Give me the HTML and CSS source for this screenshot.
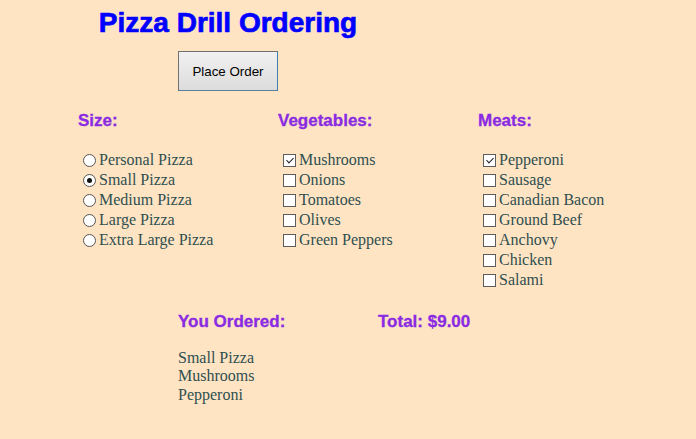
FILE: index.html
```html
<!DOCTYPE html>
<html>
<head>
<meta charset="utf-8">
<title>Pizza Drill Ordering</title>
<link rel="stylesheet" href="styles.css">
</head>
<body>
<div class="page">
  <div class="top">
    <h1 class="title">Pizza Drill Ordering</h1>
    <button class="order-btn" type="button">Place Order</button>
  </div>
  <div class="options">
    <div class="col">
      <h2 class="heading">Size:</h2>
      <div class="list">
        <label class="row"><input type="radio" name="size">Personal Pizza</label>
        <label class="row"><input type="radio" name="size" checked>Small Pizza</label>
        <label class="row"><input type="radio" name="size">Medium Pizza</label>
        <label class="row"><input type="radio" name="size">Large Pizza</label>
        <label class="row"><input type="radio" name="size">Extra Large Pizza</label>
      </div>
    </div>
    <div class="col">
      <h2 class="heading">Vegetables:</h2>
      <div class="list">
        <label class="row"><input type="checkbox" checked>Mushrooms</label>
        <label class="row"><input type="checkbox">Onions</label>
        <label class="row"><input type="checkbox">Tomatoes</label>
        <label class="row"><input type="checkbox">Olives</label>
        <label class="row"><input type="checkbox">Green Peppers</label>
      </div>
    </div>
    <div class="col">
      <h2 class="heading">Meats:</h2>
      <div class="list">
        <label class="row"><input type="checkbox" checked>Pepperoni</label>
        <label class="row"><input type="checkbox">Sausage</label>
        <label class="row"><input type="checkbox">Canadian Bacon</label>
        <label class="row"><input type="checkbox">Ground Beef</label>
        <label class="row"><input type="checkbox">Anchovy</label>
        <label class="row"><input type="checkbox">Chicken</label>
        <label class="row"><input type="checkbox">Salami</label>
      </div>
    </div>
  </div>
  <div class="summary">
    <div class="col">
      <h2 class="heading">You Ordered:</h2>
      <div class="ordered">
        <div>Small Pizza</div>
        <div>Mushrooms</div>
        <div>Pepperoni</div>
      </div>
    </div>
    <div class="col">
      <h2 class="heading">Total: $9.00</h2>
    </div>
  </div>
</div>
</body>
</html>
```
FILE: styles.css
```css
html, body {
  margin: 0;
  padding: 0;
  background: #ffe4c4;
}
body {
  font-family: "Liberation Serif", "Times New Roman", serif;
  font-size: 16px;
  color: #2f4f4f;
}
.page {
  padding-left: 78px;
  padding-top: 6px;
}
.top {
  width: 300px;
  display: flex;
  flex-direction: column;
  align-items: center;
}
.title {
  margin: 0;
  font-family: "Liberation Sans", Arial, sans-serif;
  font-weight: bold;
  font-size: 28px;
  line-height: 34px;
  color: #0000ff;
  -webkit-text-stroke: 0.7px #0000ff;
  white-space: nowrap;
}
.order-btn {
  margin-top: 11px;
  width: 100px;
  height: 40px;
  padding: 0;
  font-family: "Liberation Sans", Arial, sans-serif;
  font-size: 13.33px;
  color: #000;
  background: linear-gradient(#f1f1f1, #dcdcdc);
  border: 1px solid #707070;
  border-right-color: #3c7fb1;
  border-bottom-color: #5a7fa0;
  border-radius: 0;
}
.options {
  display: flex;
  margin-top: 20px;
}
.col {
  width: 200px;
}
.heading {
  margin: 0;
  font-family: "Liberation Sans", Arial, sans-serif;
  font-weight: bold;
  font-size: 17px;
  line-height: 20px;
  color: #8a2be2;
  -webkit-text-stroke: 0.3px #8a2be2;
  white-space: nowrap;
}
.list {
  margin-top: 19px;
  display: flex;
  flex-direction: column;
}
.row {
  display: flex;
  align-items: center;
  height: 20px;
  white-space: nowrap;
}
.row input {
  -webkit-appearance: none;
  appearance: none;
  width: 13px;
  height: 13px;
  margin: 0 3px 0 5px;
  box-sizing: border-box;
  background: #fff;
  border: 1px solid #5c5c5c;
  position: relative;
  flex: none;
}
.row input[type="radio"] {
  border-radius: 50%;
  border-color: #555;
}
.row input[type="radio"]:checked::after {
  content: "";
  position: absolute;
  left: 3px;
  top: 3px;
  width: 5px;
  height: 5px;
  border-radius: 50%;
  background: #111;
}
.row input[type="checkbox"]:checked::after {
  content: "";
  position: absolute;
  left: 3.5px;
  top: 1px;
  width: 3px;
  height: 6px;
  border-right: 1.5px solid #222;
  border-bottom: 1.5px solid #222;
  transform: rotate(45deg);
}
.summary {
  display: flex;
  margin-top: 22px;
  padding-left: 100px;
}
.ordered {
  margin-top: 17px;
  line-height: 18.4px;
}
```
